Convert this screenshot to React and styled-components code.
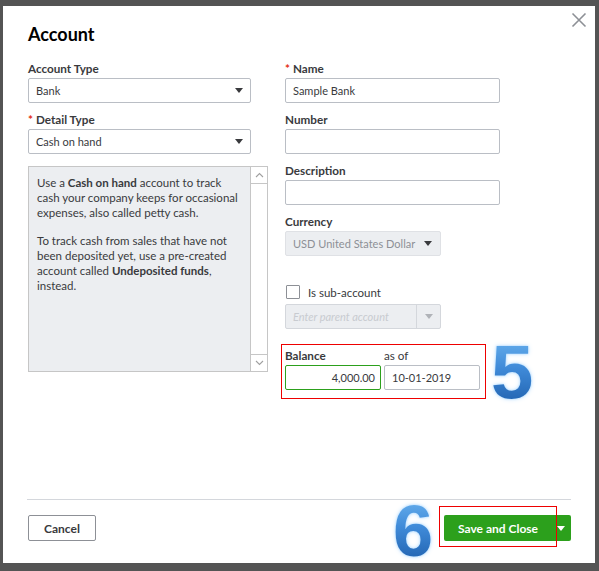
import React from 'react'
import styled, { createGlobalStyle } from 'styled-components'

const GlobalStyle = createGlobalStyle`
  html, body {
    margin: 0;
    padding: 0;
    background: #545454;
    font-family: Lato, "Open Sans", sans-serif;
    color: #393a3d;
  }
`

const Page = styled.div`
  width: 599px;
  height: 571px;
  padding: 6px 0 0 3px;
  box-sizing: border-box;
`

const Modal = styled.div`
  position: relative;
  width: 592px;
  height: 557px;
  background: #fff;
  display: flex;
  flex-direction: column;
  box-sizing: border-box;
  padding: 0 24px 0 24px;
`

const CloseButton = styled.button`
  position: absolute;
  top: 6px;
  right: 8px;
  width: 16px;
  height: 16px;
  padding: 0;
  border: 0;
  background: none;
  cursor: pointer;
`

const Title = styled.h1`
  margin: 0;
  padding: 17px 0 0 1px;
  height: 38px;
  box-sizing: content-box;
  font-size: 18px;
  line-height: 22px;
  font-weight: 700;
  color: #000;
`

const Body = styled.div`
  flex: 1;
  display: flex;
  gap: 17px;
  padding-left: 1px;
`

const Column = styled.div`
  display: flex;
  flex-direction: column;
  width: ${p => p.width}px;
`

const Field = styled.div`
  display: flex;
  flex-direction: column;
  margin-bottom: 9px;
`

const Label = styled.label`
  font-size: 11.7px;
  line-height: 14px;
  font-weight: ${p => (p.light ? 400 : 700)};
  margin-bottom: 3px;
  color: #393a3d;

  span {
    color: #e42e13;
    margin-right: 3px;
  }
`

const Box = styled.div`
  box-sizing: border-box;
  height: 25px;
  width: ${p => (p.width ? `${p.width}px` : '100%')};
  border: 1px solid ${p => p.border || '#babec5'};
  border-radius: 2px;
  background: ${p => p.bg || '#fff'};
  display: flex;
  align-items: center;
  font-size: 11px;
  color: ${p => p.color || '#393a3d'};
  padding: 0 0 0 7px;
  justify-content: ${p => (p.right ? 'flex-end' : 'flex-start')};
  ${p => p.right && 'padding: 0 5px 0 0;'}
`

const BoxText = styled.div`
  flex: 1;
  font-style: ${p => (p.italic ? 'italic' : 'normal')};
  white-space: nowrap;
  overflow: hidden;
`

const CaretCell = styled.div`
  width: ${p => p.w || 22}px;
  height: 100%;
  display: flex;
  align-items: center;
  justify-content: center;
  flex-shrink: 0;
  ${p => p.divider && 'border-left: 1px solid #d4d7dc;'}
`

const Caret = ({ color = '#393a3d' }) => (
  <svg width="8" height="5" viewBox="0 0 8 5">
    <path d="M0 0h8L4 5z" fill={color} />
  </svg>
)

const DescBox = styled.div`
  margin-top: 3px;
  width: 240px;
  height: 206px;
  box-sizing: border-box;
  border: 1px solid #c6c6c6;
  background: #eceef1;
  display: flex;
`

const DescText = styled.div`
  flex: 1;
  padding: 8px 5px 0 8px;
  font-size: 11.5px;
  line-height: 15px;
  color: #393a3d;

  p {
    margin: 0 0 13px;
  }
  b {
    font-weight: 700;
  }
`

const Scrollbar = styled.div`
  width: 16px;
  background: #fff;
  border-left: 1px solid #c6c6c6;
  display: flex;
  flex-direction: column;
  justify-content: space-between;
`

const ScrollArrow = styled.div`
  height: 16px;
  display: flex;
  align-items: center;
  justify-content: center;
  ${p => (p.down ? 'border-top' : 'border-bottom')}: 1px solid #c6c6c6;
`

const Chevron = ({ down }) => (
  <svg width="9" height="6" viewBox="0 0 9 6">
    <path d={down ? 'M1 1l3.5 3.5L8 1' : 'M1 5l3.5-3.5L8 5'} fill="none" stroke="#a0a0a0" strokeWidth="1.1" />
  </svg>
)

const CheckRow = styled.div`
  margin-top: 20px;
  display: flex;
  align-items: center;
  gap: 8px;
  height: 14px;
  font-size: 11.5px;
  padding-left: 1px;
`

const Checkbox = styled.div`
  width: 12px;
  height: 12px;
  border: 1px solid #8d9096;
  border-radius: 1px;
  background: #fff;
`

const ParentBox = styled(Box)`
  margin-top: 5px;
  padding-right: 0;
`

const BalanceRow = styled.div`
  margin-top: 15px;
  display: flex;
  align-items: flex-start;
  margin-left: -4px;
  gap: 5px;
`

const Highlight = styled.div`
  border: 1px solid #ee0000;
  padding: 3px 5px 8px 3px;
  display: flex;
  gap: 3px;
`

const SmallField = styled.div`
  display: flex;
  flex-direction: column;
  width: 96px;
`

const Numeral = styled.span`
  font-family: "Liberation Sans", Arial, sans-serif;
  font-weight: 700;
  font-size: ${p => p.size}px;
  line-height: 1;
  margin-top: ${p => p.offset}px;
  background: linear-gradient(180deg, #6bb4f0 0%, #3f8ad8 45%, #1d5daa 100%);
  -webkit-background-clip: text;
  background-clip: text;
  color: transparent;
  filter: drop-shadow(0 0 1px #a8d6ff) drop-shadow(0 0 2px #cfe9ff);
`

const Footer = styled.div`
  border-top: 1px solid #d4d7dc;
  height: 64px;
  box-sizing: border-box;
  display: flex;
  align-items: flex-start;
  justify-content: space-between;
  padding-top: 15px;
`

const CancelButton = styled.button`
  width: 68px;
  height: 26px;
  border: 1px solid #8d9096;
  border-radius: 2px;
  background: #fff;
  font-family: Lato, sans-serif;
  font-size: 12px;
  font-weight: 700;
  color: #393a3d;
  margin-left: 1px;
`

const Actions = styled.div`
  display: flex;
  align-items: flex-start;
  gap: 11px;
`

const SaveWrap = styled.div`
  position: relative;
`

const SaveButton = styled.div`
  width: 127px;
  height: 26px;
  background: #2ca01c;
  border-radius: 2px;
  display: flex;
  align-items: center;
  color: #fff;
  font-size: 12px;
  font-weight: 700;
`

const SaveLabel = styled.div`
  flex: 1;
  padding-left: 14px;
`

const AnnotationBox = styled.div`
  position: absolute;
  left: -5px;
  top: -9px;
  width: 118px;
  height: 41px;
  box-sizing: border-box;
  border: 1px solid #ee0000;
  pointer-events: none;
`

export default function App() {
  return (
    <>
      <GlobalStyle />
      <Page>
        <Modal>
          <CloseButton aria-label="Close">
            <svg width="16" height="16" viewBox="0 0 16 16">
              <path d="M1.5 1.5l13 13M14.5 1.5l-13 13" stroke="#8d9096" strokeWidth="1.6" />
            </svg>
          </CloseButton>
          <Title>Account</Title>
          <Body>
            <Column width={240}>
              <Field>
                <Label>Account Type</Label>
                <Box width={223}>
                  <BoxText>Bank</BoxText>
                  <CaretCell><Caret /></CaretCell>
                </Box>
              </Field>
              <Field>
                <Label><span>*</span>Detail Type</Label>
                <Box width={223}>
                  <BoxText>Cash on hand</BoxText>
                  <CaretCell><Caret /></CaretCell>
                </Box>
              </Field>
              <DescBox>
                <DescText>
                  <p>Use a <b>Cash on hand</b> account to track cash your company keeps for occasional expenses, also called petty cash.</p>
                  <p>To track cash from sales that have not been deposited yet, use a pre-created account called <b>Undeposited funds</b>, instead.</p>
                </DescText>
                <Scrollbar>
                  <ScrollArrow><Chevron /></ScrollArrow>
                  <ScrollArrow down><Chevron down /></ScrollArrow>
                </Scrollbar>
              </DescBox>
            </Column>
            <Column width={215}>
              <Field>
                <Label><span>*</span>Name</Label>
                <Box><BoxText>Sample Bank</BoxText></Box>
              </Field>
              <Field>
                <Label>Number</Label>
                <Box />
              </Field>
              <Field>
                <Label>Description</Label>
                <Box />
              </Field>
              <Field>
                <Label>Currency</Label>
                <Box width={156} bg="#eceef1" border="#dfe1e5" color="#8d9096">
                  <BoxText>USD United States Dollar</BoxText>
                  <CaretCell w={24}><Caret /></CaretCell>
                </Box>
              </Field>
              <CheckRow>
                <Checkbox />
                Is sub-account
              </CheckRow>
              <ParentBox width={156} bg="#eceef1" border="#d4d7dc" color="#c8cbd0">
                <BoxText italic>Enter parent account</BoxText>
                <CaretCell w={23} divider><Caret color="#b0b3b8" /></CaretCell>
              </ParentBox>
              <BalanceRow>
                <Highlight>
                  <SmallField>
                    <Label>Balance</Label>
                    <Box border="#2ca01c" right>4,000.00</Box>
                  </SmallField>
                  <SmallField>
                    <Label light>as of</Label>
                    <Box>10-01-2019</Box>
                  </SmallField>
                </Highlight>
                <Numeral size={76} offset={-10}>5</Numeral>
              </BalanceRow>
            </Column>
          </Body>
          <Footer>
            <CancelButton>Cancel</CancelButton>
            <Actions>
              <Numeral size={72} offset={-20}>6</Numeral>
              <SaveWrap>
                <SaveButton>
                  <SaveLabel>Save and Close</SaveLabel>
                  <CaretCell w={20}><Caret color="#fff" /></CaretCell>
                </SaveButton>
                <AnnotationBox />
              </SaveWrap>
            </Actions>
          </Footer>
        </Modal>
      </Page>
    </>
  )
}
